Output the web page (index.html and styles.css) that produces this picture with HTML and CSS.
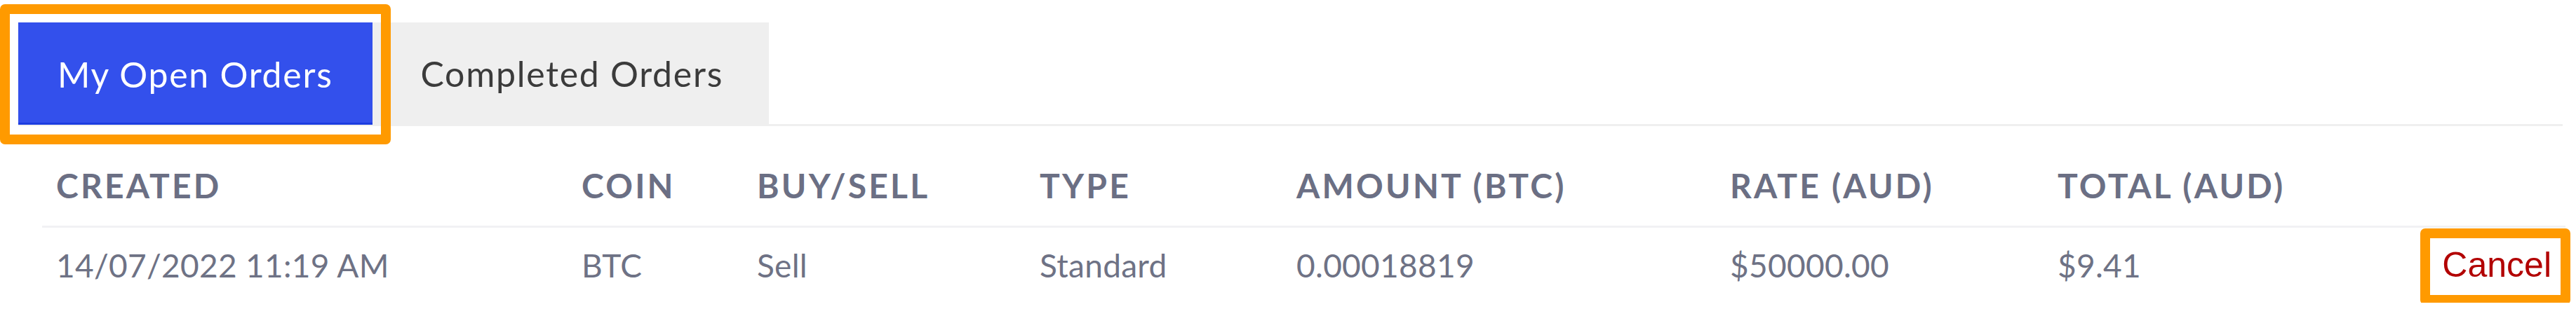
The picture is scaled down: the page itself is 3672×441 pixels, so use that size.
FILE: index.html
```html
<!DOCTYPE html>
<html lang="en">
<head>
<meta charset="utf-8">
<title>Orders</title>
<link rel="stylesheet" href="styles.css">
</head>
<body>
<div class="page">
  <div class="tabs">
    <div class="tab tab-active">My Open Orders</div>
    <div class="tab">Completed Orders</div>
  </div>
  <table class="orders">
    <colgroup>
      <col class="c1"><col class="c2"><col class="c3"><col class="c4"><col class="c5"><col class="c6"><col class="c7">
    </colgroup>
    <thead>
      <tr>
        <th>CREATED</th>
        <th>COIN</th>
        <th>BUY/SELL</th>
        <th>TYPE</th>
        <th>AMOUNT (BTC)</th>
        <th>RATE (AUD)</th>
        <th>TOTAL (AUD)</th>
        <th></th>
      </tr>
    </thead>
    <tbody>
      <tr>
        <td>14/07/2022 11:19 AM</td>
        <td>BTC</td>
        <td>Sell</td>
        <td>Standard</td>
        <td>0.00018819</td>
        <td>$50000.00</td>
        <td>$9.41</td>
        <td class="action"><span class="cancel">Cancel</span></td>
      </tr>
    </tbody>
  </table>
</div>
</body>
</html>
```
FILE: styles.css
```css
html, body {
  margin: 0;
  padding: 0;
  background: #ffffff;
}
body {
  font-family: Lato, "Noto Sans", sans-serif;
  color: #6e7285;
}
.page {
  padding: 32px 19px 0 26px;
}
.tabs {
  display: flex;
  border-bottom: 3px solid #efefef;
}
.tab {
  height: 145px;
  padding: 0 65px 0 69px;
  display: flex;
  align-items: center;
  background: #efefef;
  color: #3b3b3b;
  font-size: 50px;
  letter-spacing: 1.7px;
}
.tab-active {
  position: relative;
  height: 146px;
  box-sizing: border-box;
  padding: 4px 56px 0 56px;
  background: #3350ec;
  color: #ffffff;
  border-bottom: 3px solid #1d3ddf;
  margin-bottom: -3px;
}
.tab-active::after {
  content: "";
  position: absolute;
  left: -26px;
  top: -26px;
  right: -26px;
  bottom: -31px;
  border: 14px solid #ff9a00;
  border-radius: 7px;
}
.orders {
  margin: 28px 0 0 34px;
  width: 3597px;
  border-collapse: collapse;
  table-layout: fixed;
}
.c1 { width: 749px; }
.c2 { width: 250px; }
.c3 { width: 403px; }
.c4 { width: 366px; }
.c5 { width: 618px; }
.c6 { width: 467px; }
.c7 { width: 467px; }
.orders th {
  text-align: left;
  font-weight: 700;
  font-size: 48px;
  letter-spacing: 3.2px;
  color: #6b6f84;
  height: 115px;
  padding: 0 20px;
  vertical-align: middle;
  border-bottom: 3px solid #f1f1f4;
  box-sizing: border-box;
  white-space: nowrap;
}
.orders td {
  font-size: 46px;
  font-weight: 400;
  letter-spacing: 0.3px;
  color: #6e7285;
  height: 107px;
  padding: 0 20px;
  vertical-align: middle;
  white-space: nowrap;
}
.orders td.action {
  text-align: right;
  letter-spacing: 0;
}
.cancel {
  position: relative;
  font-family: "Liberation Sans", Arial, sans-serif;
  font-size: 50px;
  color: #b20000;
}
.cancel::after {
  content: "";
  position: absolute;
  left: -31px;
  right: -27px;
  top: -24px;
  bottom: -29px;
  border: 14px solid #ff9a00;
  border-radius: 7px;
}
```
